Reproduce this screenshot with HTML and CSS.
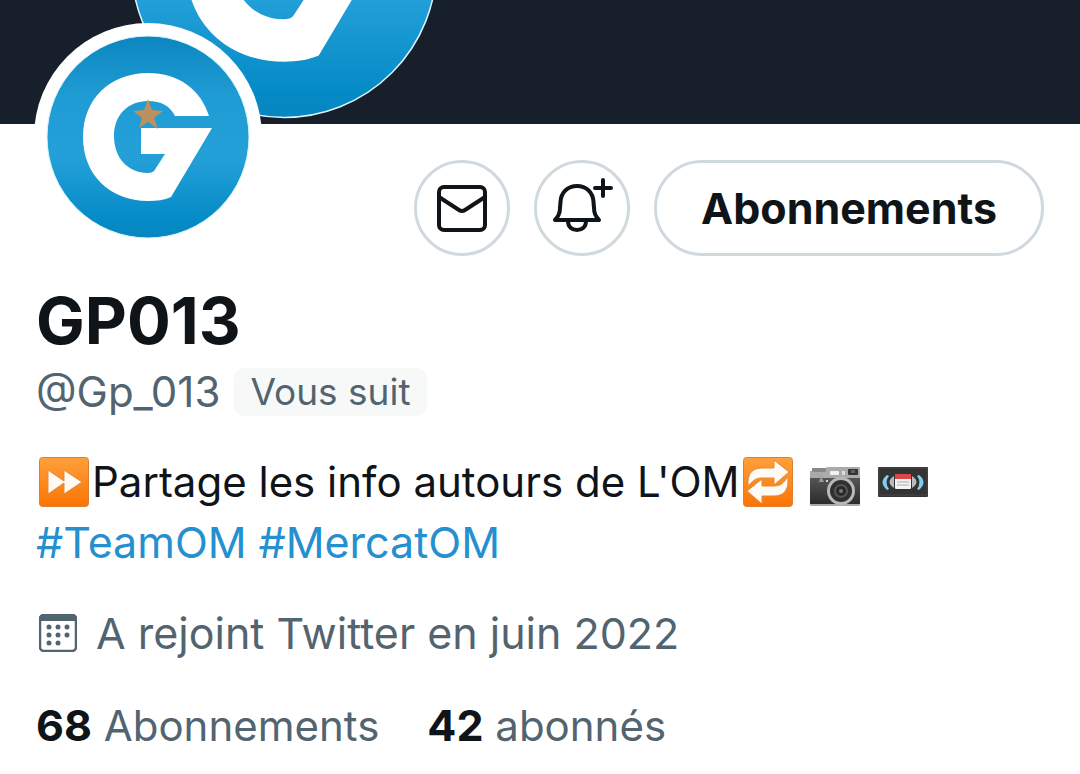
FILE: index.html
```html
<!DOCTYPE html>
<html lang="fr">
<head>
  <meta charset="UTF-8" />
  <meta name="viewport" content="width=device-width, initial-scale=1.0" />
  <title>GP013 (@Gp_013)</title>
  <link rel="stylesheet" href="styles.css">
</head>
<body>
  <!-- shared logo, used by the cover and the avatar -->
  <svg class="defs" width="0" height="0" aria-hidden="true">
    <defs>
      <linearGradient id="blue" x1="0" y1="0" x2="0" y2="1">
        <stop offset="0" stop-color="#0b86bf" />
        <stop offset="0.3" stop-color="#209cd4" />
        <stop offset="0.6" stop-color="#24a0d8" />
        <stop offset="0.92" stop-color="#048ac6" />
        <stop offset="1" stop-color="#0886c0" />
      </linearGradient>
      <linearGradient id="orange" x1="0" y1="0" x2="0" y2="1">
        <stop offset="0" stop-color="#ffa03a" />
        <stop offset="1" stop-color="#fb7403" />
      </linearGradient>
      <linearGradient id="body" x1="0" y1="0" x2="0" y2="1">
        <stop offset="0" stop-color="#555" />
        <stop offset="1" stop-color="#2b2b2b" />
      </linearGradient>
      <symbol id="logo" viewBox="-102 -102 204 204">
        <circle r="101" fill="url(#blue)" stroke="#d8f4fc" stroke-width="1" />
        <path fill="#fff" d="M61-21C53-47 31-64 0-64C-38-64-65-38-65 0C-65 38-38 64 0 64C9 64 16 63 23 60L64-9H-7V17H17L6 34Q4 36 0 36C-20 36-34 21-34-1C-34-22-20-36 0-36C13-36 22-31 27-21Z" />
      </symbol>
    </defs>
  </svg>

  <header class="cover">
    <svg class="cover-logo" aria-hidden="true"><use href="#logo" /></svg>
  </header>

  <main class="profile">
    <div class="top-row">
      <div class="avatar">
        <svg viewBox="-102 -102 204 204" role="img" aria-label="GP013">
          <use href="#logo" x="-102" y="-102" width="204" height="204" />
          <path fill="#bd9060" d="M0-38L4-27L15-26L6-19L10-8L0-15L-9-9L-6-19L-15-26L-4-27Z" />
        </svg>
      </div>
      <div class="actions">
        <button class="icon-btn" aria-label="Message">
          <svg width="52" height="52" viewBox="0 0 52 52">
            <rect x="3" y="5" width="46" height="43" rx="5" />
            <path d="M3 15L23 28Q26 30 29 28L49 15" />
          </svg>
        </button>
        <button class="icon-btn" aria-label="Notifications">
          <svg width="64" height="64" viewBox="0 0 64 64">
            <path d="M5 44C9 40 10 37 10 32L10.500 26C11 16 18 10 27 10C36 10 43 16 43.500 26L44 32C44 37 45 40 49 44Z" />
            <path d="M18 45C18 51 22 54 27 54C32 54 36 51 36 45" />
            <path d="M53 4V20M45 12H61" />
          </svg>
        </button>
        <button class="follow-btn">Abonnements</button>
      </div>
    </div>

    <h1 class="name">GP013</h1>
    <div class="handle-row">
      <span class="handle">@Gp_013</span>
      <span class="badge">Vous suit</span>
    </div>

    <p class="bio"><svg class="emoji" viewBox="0 0 50 50" role="img" aria-label="Avance rapide"><rect x="0.500" y="0.500" width="49" height="49" rx="3" fill="url(#orange)" stroke="#dc8030" /><path d="M9 13L25 24V13L43 25L25 37V26L9 37Z" fill="#fffaf3" stroke="#e08a3c" stroke-width="1" stroke-linejoin="round" /></svg>Partage les info autours de L'OM<svg class="emoji" viewBox="0 0 50 50" role="img" aria-label="Répéter"><rect x="0.500" y="0.500" width="49" height="49" rx="3" fill="url(#orange)" stroke="#dc8030" /><g fill="#fffaf3" stroke="#e08a3c" stroke-width="1" stroke-linejoin="round"><path d="M5 29V25C5 16 10 11 19 11H31V3L46 15L31 28V21H19C12 21 10 24 5 29Z" /><path d="M45 20V24C45 34 40 39 31 39H19V47L4 34L19 22V29H31C38 29 40 26 45 20Z" /></g></svg> <svg class="emoji" viewBox="0 0 50 50" role="img" aria-label="Appareil photo"><path d="M2 11H15L18 10H49Q50 10 50 12V48Q50 49 49 49H1Q0 49 0 48V14H2Z" fill="#aaa" /><rect x="2" y="11" width="14" height="4" rx="1" fill="#888" /><rect x="0" y="21" width="50" height="26" fill="url(#body)" /><rect x="20" y="14" width="9" height="4" rx="1" fill="#f2f2f2" /><rect x="32" y="14" width="3" height="4" fill="#ddd" /><rect x="38" y="12" width="10" height="6" rx="1" fill="#333" /><rect x="41" y="13" width="4" height="3" fill="#59636b" /><path d="M11 19L9 25H14Z" fill="#999" /><circle cx="17" cy="24" r="1" fill="#fff" /><circle cx="31" cy="34" r="14" fill="#b8b8b8" /><circle cx="31" cy="34" r="11" fill="#303030" /><circle cx="31" cy="34" r="7" fill="#555" /><circle cx="31" cy="34" r="5" fill="#292929" /><circle cx="31" cy="34" r="2" fill="#777" /></svg> <svg class="emoji" viewBox="0 0 50 50" role="img" aria-label="Cassette vidéo"><rect x="0" y="10" width="50" height="30" rx="1" fill="#333" /><rect x="1" y="11" width="48" height="27" fill="none" stroke="#484848" /><path d="M9 18Q0 25 9 33L11 32Q6 25 11 19ZM41 18Q50 25 41 33L39 32Q44 25 39 19Z" fill="#83cdec" /><path d="M16 19Q7 25 16 31ZM34 19Q43 25 34 31Z" fill="#bbb" /><rect x="17" y="18" width="16" height="14" rx="1" fill="#f4f4f4" /><path d="M17 17H33V22H17Z" fill="#d84848" /><path d="M19 25H31M19 28H31" stroke="#aaa" /></svg><br><a href="#TeamOM">#TeamOM</a> <a href="#MercatOM">#MercatOM</a></p>

    <div class="joined">
      <svg width="38" height="38" viewBox="0 0 38 38" aria-hidden="true">
        <rect x="1" y="1" width="36" height="36" rx="4" fill="none" stroke="#536471" stroke-width="2.500" />
        <path d="M0 7V5Q0 0 5 0H33Q38 0 38 5V7Z" fill="#536471" />
        <g fill="#536471">
          <circle cx="10" cy="13" r="2.500" /><circle cx="19" cy="13" r="2.500" /><circle cx="28" cy="13" r="2.500" />
          <circle cx="10" cy="21" r="2.500" /><circle cx="19" cy="21" r="2.500" /><circle cx="28" cy="21" r="2.500" />
          <circle cx="10" cy="29" r="2.500" /><circle cx="19" cy="29" r="2.500" />
        </g>
      </svg>
      <span>A rejoint Twitter en juin 2022</span>
    </div>

    <div class="stats">
      <a href="#following"><strong>68</strong> Abonnements</a>
      <a href="#followers"><strong>42</strong> abonnés</a>
    </div>
  </main>
</body>
</html>
```
FILE: styles.css
```css
body {
  margin: 0;
  background: #fff;
  color: #0f1419;
  font-family: Inter, "Liberation Sans", sans-serif;
  font-size: 43px;
  line-height: 60px;
}

.defs {
  position: absolute;
}

.cover {
  height: 124px;
  background: #17202a;
  overflow: hidden;
}

.cover-logo {
  display: block;
  width: 308px;
  height: 308px;
  margin: -189px 0 0 130px;
}

.profile {
  padding: 0 36px 18px;
}

.top-row {
  display: flex;
  justify-content: space-between;
  align-items: flex-start;
}

.avatar {
  position: relative;
  box-sizing: border-box;
  width: 228px;
  height: 228px;
  margin: -101px 0 0 -2px;
  padding: 12px;
  background: #fff;
  border-radius: 50%;
}

.avatar svg {
  display: block;
  width: 100%;
  height: 100%;
}

.actions {
  display: flex;
  gap: 24px;
  padding-top: 36px;
}

.icon-btn, .follow-btn {
  box-sizing: border-box;
  height: 96px;
  padding: 0;
  background: #fff;
  border: 3px solid #cfd9de;
  border-radius: 48px;
  color: #0f1419;
  font: inherit;
  cursor: pointer;
}

.icon-btn {
  display: flex;
  justify-content: center;
  align-items: center;
  width: 96px;
}

.icon-btn svg {
  fill: none;
  stroke: #0f1419;
  stroke-width: 4;
  stroke-linecap: round;
  stroke-linejoin: round;
}

.follow-btn {
  padding: 0 44px;
  font-weight: 700;
}

.name {
  margin: 24px 0 0;
  font-size: 65px;
  font-weight: 700;
  line-height: 82px;
}

.handle-row {
  display: flex;
  align-items: center;
  gap: 14px;
  color: #536471;
  font-size: 42px;
}

.badge {
  padding: 0 16px;
  background: #f7f9f9;
  border-radius: 10px;
  font-size: 37px;
  line-height: 48px;
}

.bio {
  margin: 30px 0;
  font-size: 42px;
}

.bio a {
  color: #2490cf;
  font-size: 43px;
  text-decoration: none;
}

.emoji {
  width: 50px;
  height: 50px;
  margin: 0 3px;
  vertical-align: -10px;
}

.joined {
  display: flex;
  align-items: center;
  gap: 19px;
  padding-left: 3px;
  color: #536471;
}

.stats {
  display: flex;
  gap: 48px;
  margin-top: 32px;
  font-size: 42px;
}

.stats a {
  color: #536471;
  text-decoration: none;
}

.stats strong {
  color: #0f1419;
  font-size: 43px;
  font-weight: 700;
}
```
